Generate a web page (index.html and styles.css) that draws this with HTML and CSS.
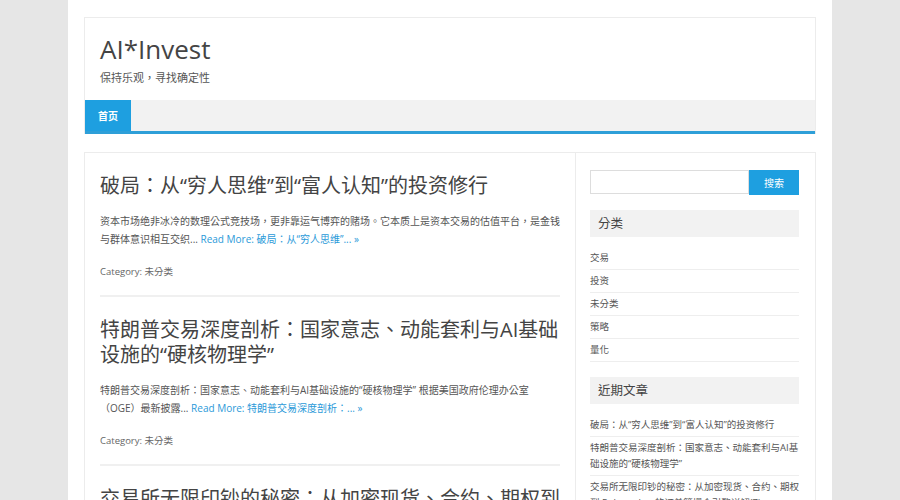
FILE: index.html
```html
<!DOCTYPE html>
<html lang="zh-CN">
<head>
    <meta charset="UTF-8">
    <title>AI*Invest</title>
    <link rel="stylesheet" href="styles.css">
</head>
<body>
    <div class="page">
        <header class="site-header">
            <div class="branding">
                <h1 class="site-title">AI*Invest</h1>
                <p class="site-desc">保持乐观，寻找确定性</p>
            </div>
            <nav class="main-nav">
                <a class="nav-item active" href="#">首页</a>
            </nav>
        </header>

        <div class="content">
            <main class="posts">
                <article class="post">
                    <h2 class="post-title">破局：从“穷人思维”到“富人认知”的投资修行</h2>
                    <p class="excerpt">资本市场绝非冰冷的数理公式竞技场，更非靠运气博弈的赌场。它本质上是资本交易的估值平台，是金钱与群体意识相互交织... <a href="#">Read More: 破局：从“穷人思维”... »</a></p>
                    <p class="meta">Category: 未分类</p>
                </article>
                <article class="post">
                    <h2 class="post-title">特朗普交易深度剖析：国家意志、动能套利与AI基础设施的“硬核物理学”</h2>
                    <p class="excerpt">特朗普交易深度剖析：国家意志、动能套利与AI基础设施的“硬核物理学” 根据美国政府伦理办公室（OGE）最新披露... <a href="#">Read More: 特朗普交易深度剖析：... »</a></p>
                    <p class="meta">Category: 未分类</p>
                </article>
                <article class="post">
                    <h2 class="post-title">交易所无限印钞的秘密：从加密现货、合约、期权到 Polymarket 的订单簿撮合引擎详解</h2>
                </article>
            </main>

            <aside class="sidebar">
                <form class="search">
                    <input type="text" class="search-input">
                    <button type="button" class="search-btn">搜索</button>
                </form>

                <section class="widget">
                    <h3 class="widget-title">分类</h3>
                    <ul class="widget-list">
                        <li>交易</li>
                        <li>投资</li>
                        <li>未分类</li>
                        <li>策略</li>
                        <li>量化</li>
                    </ul>
                </section>

                <section class="widget">
                    <h3 class="widget-title">近期文章</h3>
                    <ul class="widget-list recent">
                        <li>破局：从“穷人思维”到“富人认知”的投资修行</li>
                        <li>特朗普交易深度剖析：国家意志、动能套利与AI基础设施的“硬核物理学”</li>
                        <li>交易所无限印钞的秘密：从加密现货、合约、期权到 Polymarket 的订单簿撮合引擎详解(7)</li>
                    </ul>
                </section>
            </aside>
        </div>
    </div>
</body>
</html>
```

FILE: styles.css
```css
body {
    margin: 0;
    background-color: #e6e6e6;
    font-family: "Open Sans", "Noto Sans CJK TC", sans-serif;
    font-feature-settings: "locl" 0;
    color: #555;
}

.page {
    width: 732px;
    margin: 0 auto;
    padding: 17px 16px 0;
    background-color: #fff;
    min-height: 500px;
}

.site-header {
    border: 1px solid #ececec;
    border-bottom: none;
}

.branding {
    padding: 17px 15px 15px;
}

.site-title {
    margin: 0;
    font-size: 26px;
    font-weight: 400;
    line-height: 28px;
    color: #444;
}

.site-desc {
    margin: 8px 0 0;
    font-size: 11px;
    line-height: 14px;
    color: #555;
}

.main-nav {
    display: flex;
    height: 31px;
    background-color: #f2f2f2;
    border-bottom: 3px solid #2e9fd8;
}

.nav-item {
    display: flex;
    align-items: center;
    padding: 0 13px;
    background-color: #1e9fe0;
    color: #fff;
    font-size: 10px;
    font-weight: bold;
    text-decoration: none;
}

.content {
    display: flex;
    margin-top: 18px;
    border: 1px solid #ececec;
    border-bottom: none;
}

.posts {
    width: 460px;
    padding: 0 15px;
    border-right: 1px solid #ececec;
}

.post {
    padding: 20px 0 16px;
    border-bottom: 2px solid #f0f0f0;
}

.post-title {
    margin: 0;
    font-size: 20px;
    font-weight: 400;
    line-height: 25px;
    color: #444;
}

.excerpt {
    margin: 14px 0 0;
    font-size: 10px;
    line-height: 18px;
    color: #555;
}

.excerpt a {
    color: #2b9ad9;
    text-decoration: none;
}

.meta {
    margin: 17px 0 0;
    font-size: 9.5px;
    line-height: 14px;
    color: #666;
}

.sidebar {
    width: 209px;
    padding: 17px 15px 0 14px;
}

.search {
    display: flex;
    margin: 0;
}

.search-input {
    box-sizing: border-box;
    width: 159px;
    height: 24px;
    margin: 0;
    border: 1px solid #ddd;
    padding: 0 5px;
}

.search-btn {
    width: 50px;
    height: 25px;
    margin: 0;
    border: none;
    background-color: #1e9fe0;
    color: #fff;
    font-family: inherit;
    font-size: 10px;
}

.widget {
    margin-top: 15px;
}

.widget-title {
    margin: 0 0 10px;
    padding: 0 8px;
    height: 27px;
    line-height: 27px;
    background-color: #f2f2f2;
    font-size: 12.5px;
    font-weight: 400;
    color: #444;
}

.widget-list {
    margin: 0;
    padding: 0;
    list-style: none;
}

.widget-list li {
    padding: 4px 0;
    font-size: 9.5px;
    line-height: 14px;
    border-bottom: 1px solid #eee;
    color: #555;
}

.recent li {
    line-height: 16px;
    padding: 3px 0 3px;
}
```
